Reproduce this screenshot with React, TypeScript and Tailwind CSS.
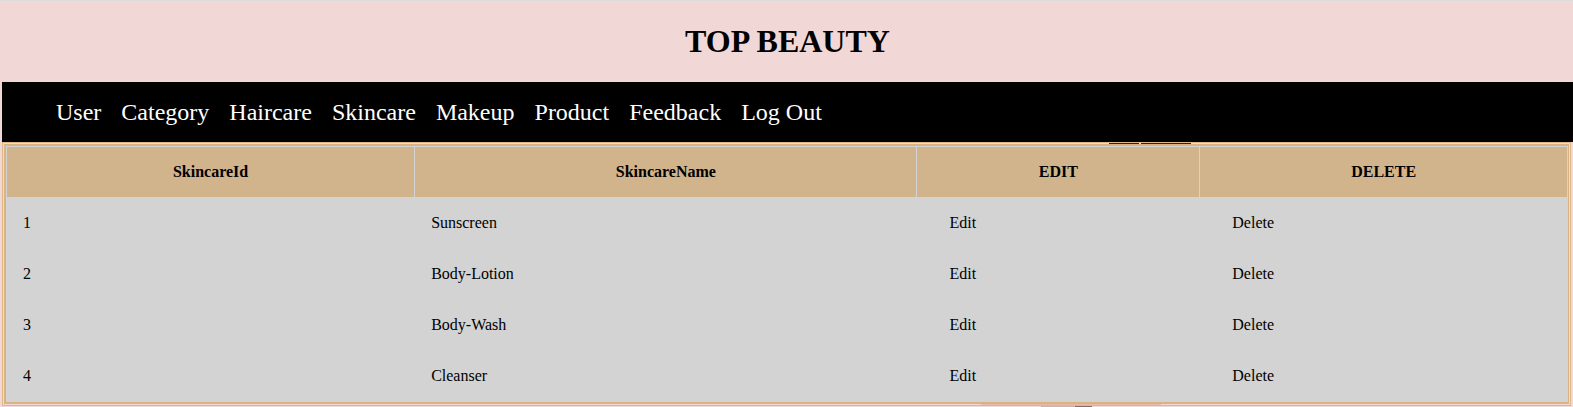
const links = ["User", "Category", "Haircare", "Skincare", "Makeup", "Product", "Feedback", "Log Out"];

const rows = [
  { id: 1, name: "Sunscreen" },
  { id: 2, name: "Body-Lotion" },
  { id: 3, name: "Body-Wash" },
  { id: 4, name: "Cleanser" },
];

function Strand({ className }: { className: string }) {
  return (
    <svg aria-hidden="true" viewBox="0 0 82 1" preserveAspectRatio="none" className={className}>
      <path d="M0 0h30v1H0z M32 0h50v1H32z" fill="#2b2522" />
    </svg>
  );
}

function Shade({ className }: { className: string }) {
  return (
    <svg aria-hidden="true" viewBox="0 0 180 3" preserveAspectRatio="none" className={className}>
      <path d="M0 0h180v1H0z" fill="#dcb096" opacity="0.7" />
      <path d="M60 2h50v1H60z" fill="#d9b0a0" />
      <path d="M94 2h17v1H94z" fill="#8f6a5c" />
    </svg>
  );
}

export default function App() {
  return (
    <div className="border-t border-[#dcdcdc] bg-[#f2d7d7] pb-px pl-0.5 font-['Liberation_Serif',serif] text-black">
      <header className="flex h-[81px] items-start justify-center pt-[22px]">
        <h1 className="text-[32px] leading-9 font-bold">TOP BEAUTY</h1>
      </header>
      <nav className="bg-black px-[54px] py-3">
        <ul className="flex gap-5">
          {links.map((link) => (
            <li key={link}>
              <a href="#" className="block text-2xl leading-9 text-white">{link}</a>
            </li>
          ))}
        </ul>
      </nav>
      <main className="relative mr-0.5 border border-[#deb887] p-px">
        <Strand className="absolute top-0 left-[70.6%] h-px w-[82px]" />
        <Shade className="absolute -bottom-0.5 left-[62.4%] h-[3px] w-[180px]" />
        <div className="border-2 border-r border-[#d9b382]">
          <table className="w-full table-fixed border-separate border-spacing-px bg-[#d3d3d3] text-base leading-[18px]">
            <colgroup>
              <col className="w-[26.15%]" />
              <col className="w-[32.2%]" />
              <col className="w-[18.1%]" />
              <col />
            </colgroup>
            <thead>
              <tr className="h-[50px] bg-[#d2b48c]">
                {["SkincareId", "SkincareName", "EDIT", "DELETE"].map((title) => (
                  <th key={title} scope="col" className="p-4 text-center font-bold">{title}</th>
                ))}
              </tr>
            </thead>
            <tbody>
              {rows.map((row) => (
                <tr key={row.id} className="h-[50px]">
                  <td className="p-4">{row.id}</td>
                  <td className="p-4">{row.name}</td>
                  <td className="px-8 py-4"><a href="#">Edit</a></td>
                  <td className="px-8 py-4"><a href="#">Delete</a></td>
                </tr>
              ))}
            </tbody>
          </table>
        </div>
      </main>
    </div>
  );
}
